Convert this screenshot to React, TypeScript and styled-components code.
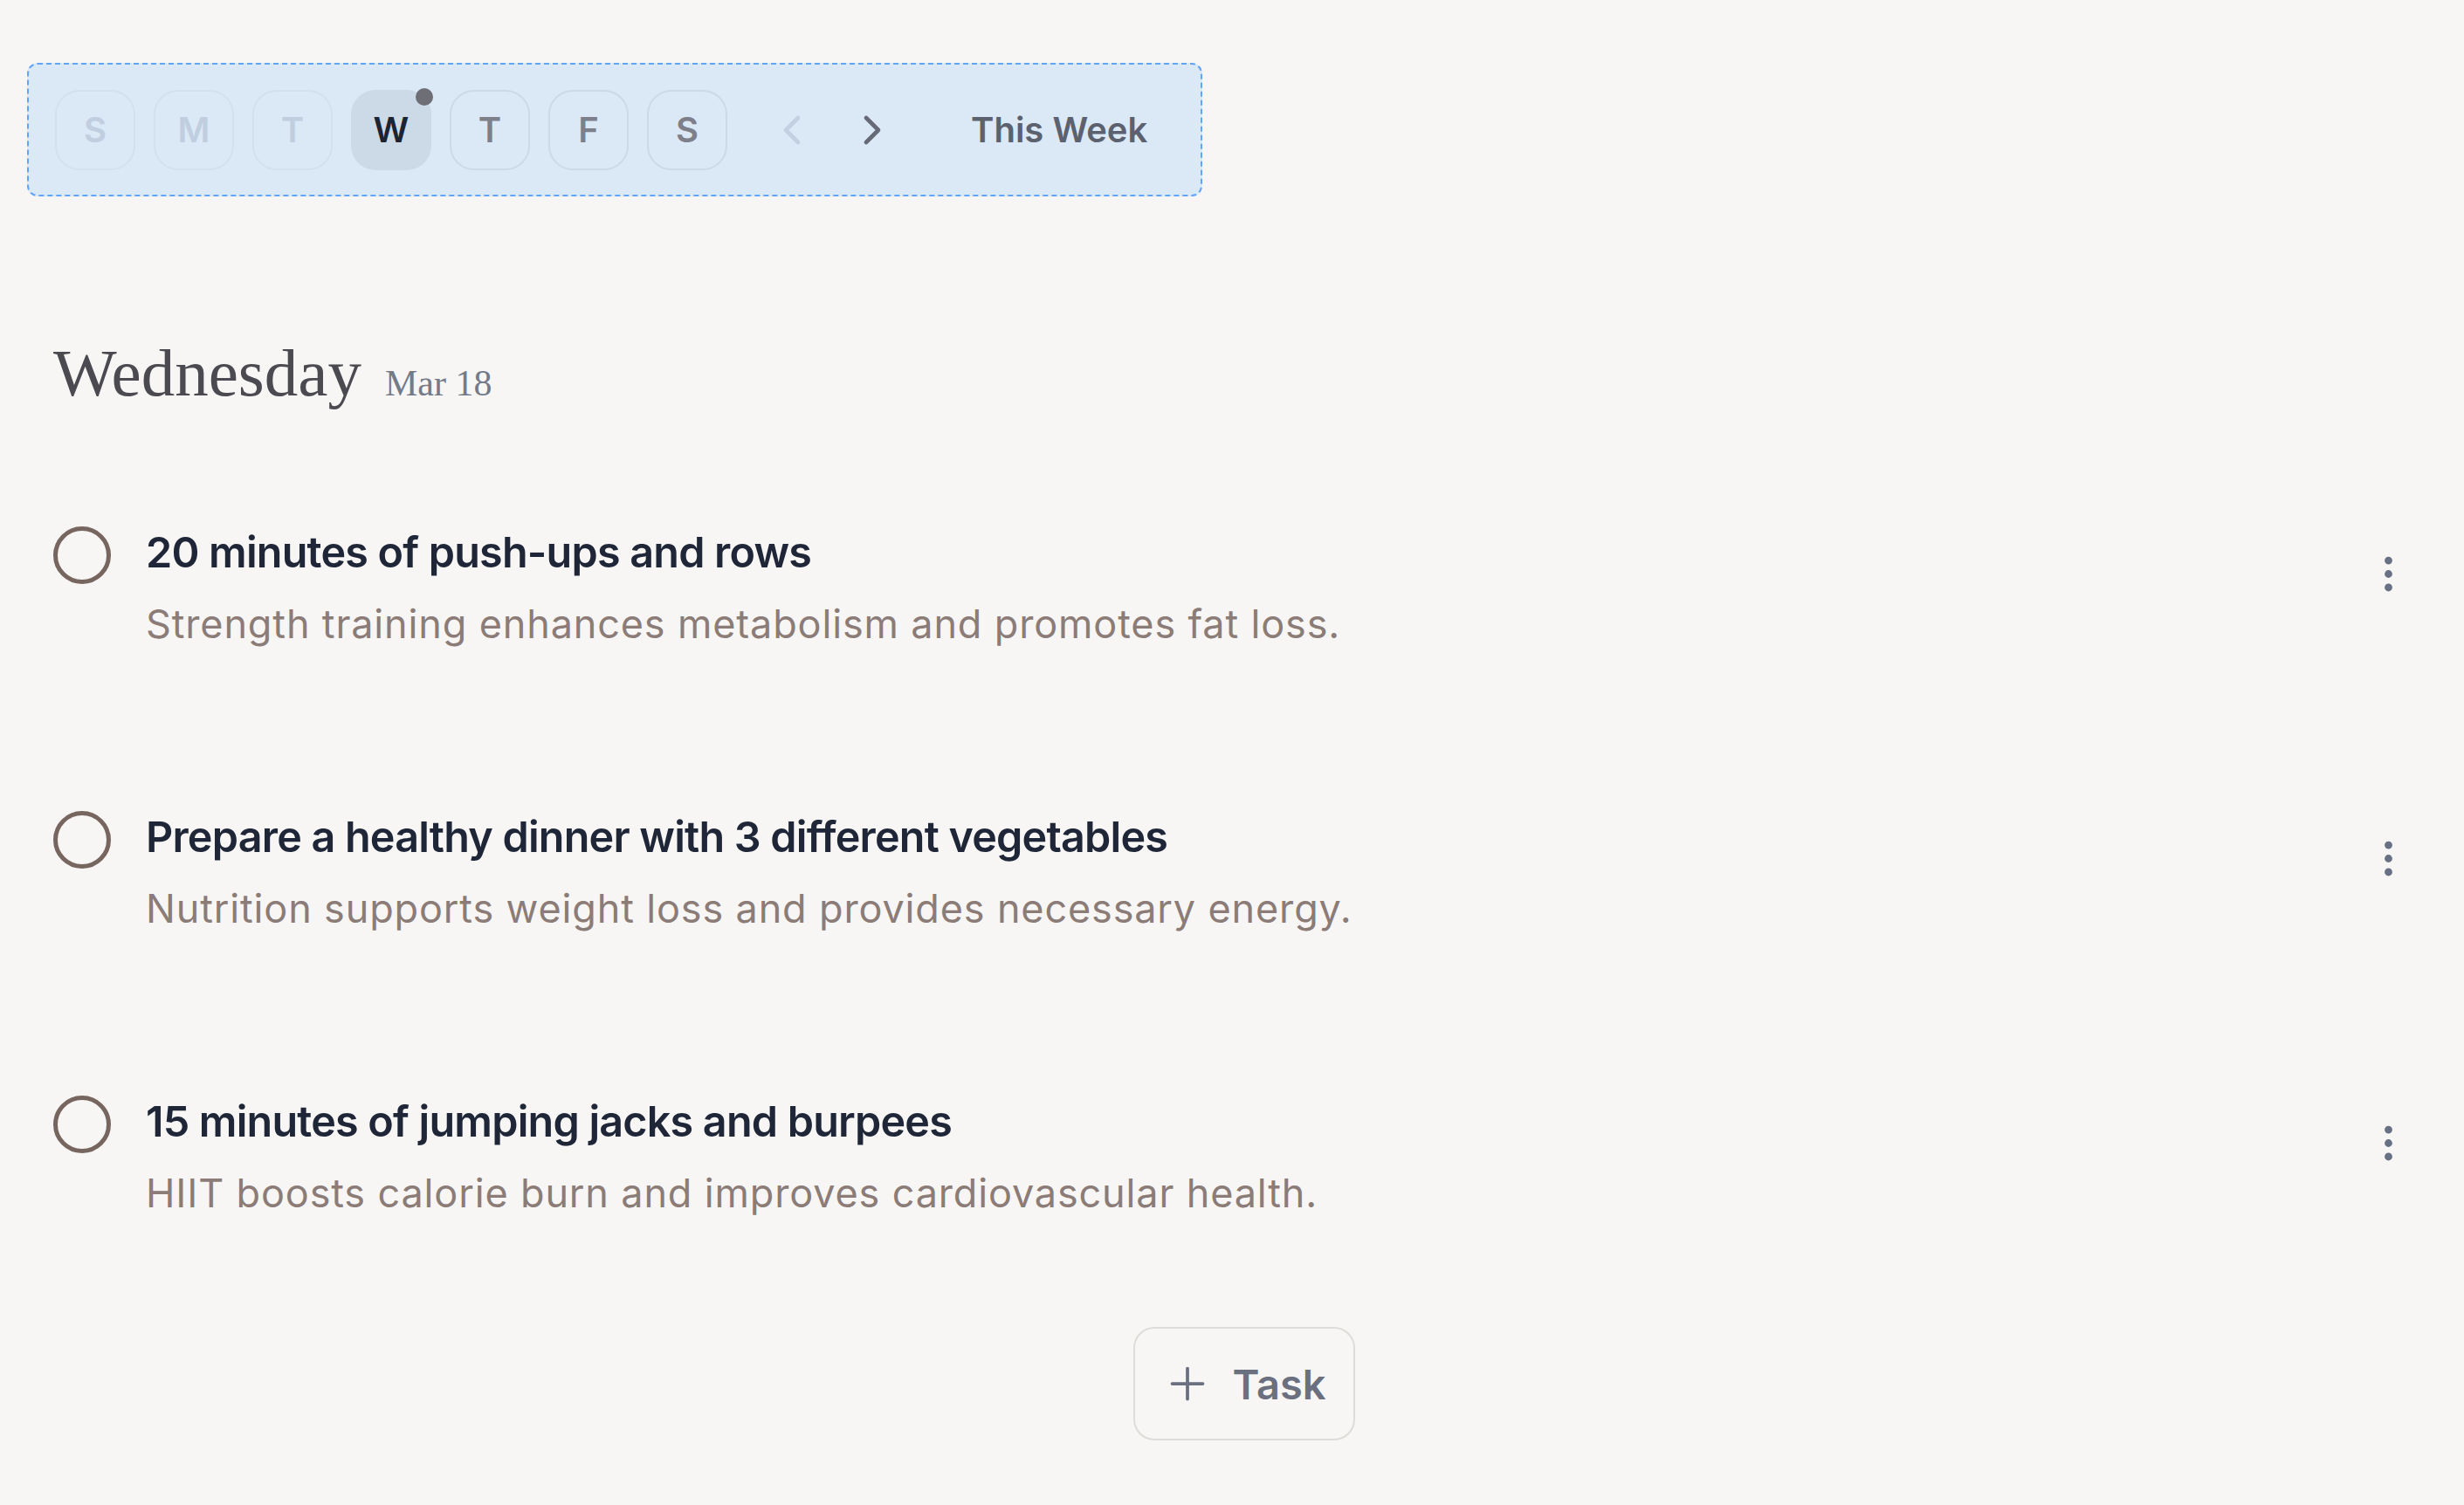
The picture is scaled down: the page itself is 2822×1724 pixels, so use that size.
import React from "react";
import styled, { createGlobalStyle } from "styled-components";
import { ChevronLeft, ChevronRight, EllipsisVertical, Plus } from "lucide-react";

const GlobalStyle = createGlobalStyle`
  body {
    margin: 0;
    background: #f7f6f4;
    font-family: Inter, "Noto Sans", sans-serif;
  }
`;

const Page = styled.div`
  min-height: 1724px;
  padding: 72px 33px 0 31px;
  box-sizing: border-box;
`;

const WeekBar = styled.div`
  display: inline-flex;
  align-items: center;
  height: 153px;
  box-sizing: border-box;
  padding: 0 61px 0 30px;
  background: #dbe8f5;
  border: 2px dashed #60a5fa;
  border-radius: 12px;
`;

const Days = styled.div`
  display: flex;
  gap: 21px;
`;

type DayState = "past" | "today" | "future";

const DayButton = styled.button<{ $state: DayState }>`
  position: relative;
  width: 92px;
  height: 92px;
  border-radius: 28px;
  font-family: Inter, sans-serif;
  font-size: 40px;
  font-weight: 600;
  display: flex;
  align-items: center;
  justify-content: center;
  padding: 0;
  border: 2px solid
    ${(p) => (p.$state === "past" ? "#d3e0ed" : p.$state === "future" ? "#ccd9e7" : "transparent")};
  background: ${(p) => (p.$state === "today" ? "#ccdae8" : "transparent")};
  color: ${(p) => (p.$state === "past" ? "#c0cee0" : p.$state === "future" ? "#7d808b" : "#1c2333")};
`;

const TodayDot = styled.span`
  position: absolute;
  top: -4px;
  right: -4px;
  width: 20px;
  height: 20px;
  border-radius: 50%;
  background: #6e6e76;
`;

const Nav = styled.div`
  display: flex;
  gap: 36px;
  margin-left: 46px;
`;

const NavButton = styled.button<{ $muted?: boolean }>`
  display: flex;
  padding: 0;
  border: 0;
  background: none;
  color: ${(p) => (p.$muted ? "#c2d0e1" : "#666a77")};
`;

const ThisWeek = styled.span`
  margin-left: 85px;
  font-size: 40px;
  font-weight: 600;
  color: #5b616e;
`;

const Content = styled.div`
  padding-left: 30px;
`;

const Heading = styled.h1`
  margin: 157px 0 0;
  display: flex;
  align-items: baseline;
  gap: 27px;
  font-family: "Liberation Serif", serif;
  font-weight: 400;
  line-height: 90px;
`;

const DayName = styled.span`
  font-size: 77px;
  color: #4a4a50;
`;

const DateText = styled.span`
  font-size: 42px;
  color: #737a8a;
`;

const TaskList = styled.div`
  display: flex;
  flex-direction: column;
  gap: 181px;
  margin-top: 116px;
`;

const TaskRow = styled.div`
  display: flex;
  align-items: flex-start;
`;

const Check = styled.span`
  flex: none;
  width: 66px;
  height: 66px;
  box-sizing: border-box;
  margin-top: 3px;
  border: 5px solid #77665f;
  border-radius: 50%;
`;

const TaskBody = styled.div`
  flex: 1;
  margin-left: 40px;
  display: flex;
  flex-direction: column;
  gap: 20px;
`;

const TaskTitle = styled.div`
  font-size: 48.5px;
  line-height: 65px;
  font-weight: 600;
  letter-spacing: -0.8px;
  color: #1e2637;
`;

const TaskNote = styled.div`
  font-size: 45px;
  line-height: 60px;
  letter-spacing: 0.85px;
  color: #8b7c78;
`;

const Kebab = styled.button`
  display: flex;
  padding: 0;
  margin: 31px 27px 0 0;
  border: 0;
  background: none;
  color: #687084;
`;

const AddRow = styled.div`
  display: flex;
  justify-content: center;
  margin-top: 123px;
`;

const AddButton = styled.button`
  display: flex;
  align-items: center;
  gap: 21px;
  height: 130px;
  box-sizing: border-box;
  padding: 0 31px 0 30px;
  border: 2px solid #dedcd9;
  border-radius: 24px;
  background: transparent;
  font-family: Inter, sans-serif;
  font-size: 47px;
  font-weight: 600;
  color: #6b7080;
`;

const days: { label: string; state: DayState }[] = [
  { label: "S", state: "past" },
  { label: "M", state: "past" },
  { label: "T", state: "past" },
  { label: "W", state: "today" },
  { label: "T", state: "future" },
  { label: "F", state: "future" },
  { label: "S", state: "future" },
];

const tasks = [
  {
    title: "20 minutes of push-ups and rows",
    note: "Strength training enhances metabolism and promotes fat loss.",
  },
  {
    title: "Prepare a healthy dinner with 3 different vegetables",
    note: "Nutrition supports weight loss and provides necessary energy.",
  },
  {
    title: "15 minutes of jumping jacks and burpees",
    note: "HIIT boosts calorie burn and improves cardiovascular health.",
  },
];

const App: React.FC = () => {
  return (
    <Page>
      <GlobalStyle />
      <WeekBar>
        <Days>
          {days.map((d, i) => (
            <DayButton key={i} $state={d.state}>
              {d.label}
              {d.state === "today" && <TodayDot />}
            </DayButton>
          ))}
        </Days>
        <Nav>
          <NavButton $muted>
            <ChevronLeft size={56} strokeWidth={2} />
          </NavButton>
          <NavButton>
            <ChevronRight size={56} strokeWidth={2} />
          </NavButton>
        </Nav>
        <ThisWeek>This Week</ThisWeek>
      </WeekBar>

      <Content>
        <Heading>
          <DayName>Wednesday</DayName>
          <DateText>Mar 18</DateText>
        </Heading>

        <TaskList>
          {tasks.map((t) => (
            <TaskRow key={t.title}>
              <Check />
              <TaskBody>
                <TaskTitle>{t.title}</TaskTitle>
                <TaskNote>{t.note}</TaskNote>
              </TaskBody>
              <Kebab>
                <EllipsisVertical size={53} strokeWidth={2} />
              </Kebab>
            </TaskRow>
          ))}
        </TaskList>

        <AddRow>
          <AddButton>
            <Plus size={60} strokeWidth={1.5} />
            Task
          </AddButton>
        </AddRow>
      </Content>
    </Page>
  );
};

export default App;
